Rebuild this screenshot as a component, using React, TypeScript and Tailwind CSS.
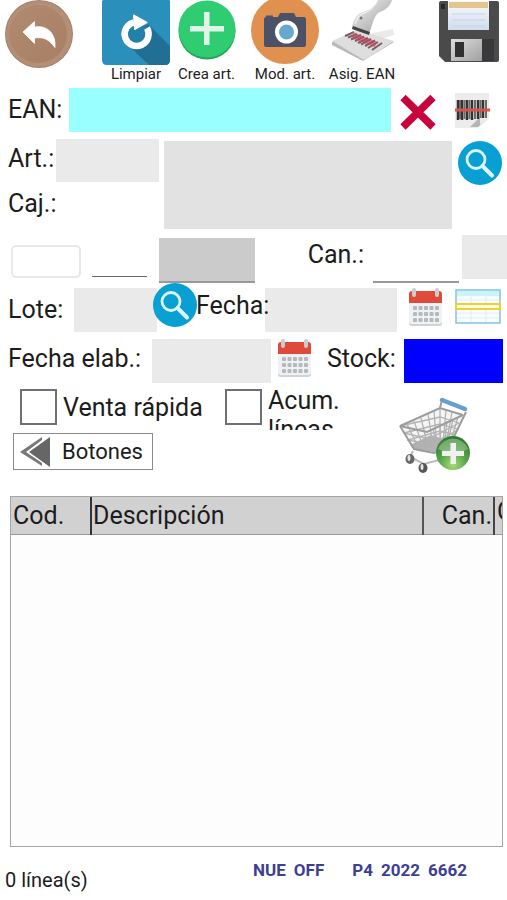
import React from "react";

const label = "text-[25px] whitespace-nowrap";
const field = "min-w-0 outline-none px-2 text-[22px]";

function BackIcon() {
  return (
    <svg viewBox="0 0 68 68" className="block h-[68px] w-[68px]">
      <defs>
        <linearGradient id="brown" x1="0" y1="0" x2="1" y2="1">
          <stop offset="0" stopColor="#b18a70" />
          <stop offset="1" stopColor="#a87f65" />
        </linearGradient>
      </defs>
      <circle cx="34" cy="34" r="34" fill="#a3806a" />
      <circle cx="34" cy="34" r="33" fill="#b48f77" />
      <circle cx="33" cy="34" r="29" fill="url(#brown)" />
      <path d="M18 32 L29.500 21.500 V27 C42 25 51 33 50 47.500 C44 39.500 39 36.500 29.500 38 V43.500 Z" fill="#fff" stroke="#fff" strokeWidth="0.800" strokeLinejoin="round" />
    </svg>
  );
}

function ResetIcon() {
  return (
    <svg viewBox="0 0 68 65" className="block h-[65px] w-[68px]">
      <path d="M1 0 H67 Q68 0 68 1 V60 Q68 65 63 65 H5 Q0 65 0 60 V1 Z" fill="#2a8fba" />
      <path d="M24 43 L46 24 L68 46 V60 Q68 65 63 65 H47 Z" fill="#216f94" />
      <circle cx="34.500" cy="34" r="12" fill="#2380a8" />
      <path d="M45 28 A12 12 0 1 1 32 22.300" fill="none" stroke="#fff" strokeWidth="6.500" />
      <path d="M32 15.500 L44.500 22.500 L33 29 Z" fill="#fff" stroke="#fff" strokeWidth="2" strokeLinejoin="round" />
    </svg>
  );
}

function AddIcon() {
  return (
    <svg viewBox="0 0 58 65" className="block h-[65px] w-[58px]">
      <circle cx="29" cy="31" r="28.500" fill="#23a558" />
      <circle cx="29" cy="29" r="28.500" fill="#2fcc71" />
      <path d="M26 12 H31.500 V26 H46 V31.500 H31.500 V45 H26 V31.500 H12 V26 H26 Z" fill="#dff5e8" />
    </svg>
  );
}

function CameraIcon() {
  return (
    <svg viewBox="0 0 68 65" className="block h-[65px] w-[68px]">
      <circle cx="34" cy="30" r="34" fill="#e0914f" />
      <path d="M15 17 V15.500 H22 V17 H27 L29 13 H43 L45 17 H53 Q55 17 55 19 V45 Q55 47 53 47 H15 Q13 47 13 45 V19 Q13 17 15 17 Z" fill="#4b5267" />
      <circle cx="35.500" cy="32" r="11.500" fill="#fff" />
      <circle cx="35.500" cy="32" r="7.500" fill="#68a8ce" />
    </svg>
  );
}

function ScannerIcon() {
  return (
    <svg viewBox="0 0 70 65" className="block h-[65px] w-[70px]">
      <defs>
        <linearGradient id="gun" x1="0" y1="0" x2="1" y2="1">
          <stop offset="0.200" stopColor="#e2e2e2" />
          <stop offset="1" stopColor="#989898" />
        </linearGradient>
      </defs>
      <path d="M42 34 L66 29 L67 35 L50 40 Z" fill="#eaeaea" />
      <path d="M5 42 L33 31 L67 42 L39 59 Q37 62 34 60 L5 45 Z" fill="#b9b9b9" />
      <path d="M5 41 L30 30 L67 41 L37 60 Z" fill="#dedede" />
      <g strokeWidth="2" stroke="#7d5f66">
        <path d="M27 32 L18 36" /><path d="M30 34 L21 37.500" /><path d="M34 35 L24 39.500" />
        <path d="M37 36.500 L28 41" /><path d="M41 38 L31 43" /><path d="M44 39 L34 44.500" />
        <path d="M48 40.500 L38 46" /><path d="M51 42 L41 48" /><path d="M55 43 L45 50" />
      </g>
      <path d="M26 35.500 L49 44.500" stroke="#c9405c" strokeWidth="6" opacity="0.550" />
      <path d="M51 0 H65 C63 7 58 10 51 13 C46 18 45 27 42 34 L25 29 C25 23 28 17 33 13 C41 11 47 7 51 0 Z" fill="url(#gun)" />
      <path d="M50 1 C48 7 42 11 35 14 Q30 17 28 24" fill="none" stroke="#fff" strokeWidth="1.500" opacity="0.600" />
      <circle cx="34" cy="18" r="1.500" fill="#777" />
      <path d="M26 26 L43 32 L42 35 L25 29 Z" fill="#454545" />
    </svg>
  );
}

function DiskIcon() {
  return (
    <svg viewBox="0 0 62 64" className="block h-[64px] w-[62px]">
      <defs>
        <linearGradient id="paper" x1="0" y1="0" x2="0" y2="1">
          <stop offset="0" stopColor="#f9fafc" />
          <stop offset="1" stopColor="#cfdcee" />
        </linearGradient>
        <linearGradient id="metal" x1="0" y1="0" x2="1" y2="1">
          <stop offset="0" stopColor="#dedede" />
          <stop offset="1" stopColor="#9f9f9f" />
        </linearGradient>
      </defs>
      <path d="M3 1 H59 Q61 1 61 3 V60 Q61 62 59 62 H7 L1 56 V3 Q1 1 3 1 Z" fill="#4b4a4b" />
      <rect x="3" y="4" width="4" height="5" fill="#292929" />
      <rect x="10" y="1" width="41" height="29" fill="url(#paper)" />
      <rect x="11" y="2" width="39" height="6" fill="#e6c58c" />
      <path d="M14 14 H47 M14 20 H47 M14 26 H47" stroke="#c9d3e2" strokeWidth="1" />
      <rect x="13" y="39" width="43" height="22" fill="#39383a" />
      <rect x="13" y="39" width="31" height="22" fill="url(#metal)" />
      <rect x="17" y="42" width="9" height="15" fill="#303030" />
    </svg>
  );
}

function CrossIcon() {
  return (
    <svg viewBox="0 0 36 36" className="block h-9 w-9">
      <path d="M3 3.500 L33 33 M33 3.500 L3 33" stroke="#c8043c" strokeWidth="7.500" />
    </svg>
  );
}

function BarcodeIcon() {
  return (
    <svg viewBox="0 0 38 38" className="block h-[38px] w-[38px]">
      <path d="M2 2 H36 V27 L25 37 H2 Z" fill="#ececec" />
      <path d="M17 36 L27 26 V34 L36 27 L25 36 Z" fill="#b5b5b5" />
      <path d="M5 9 V29 M9 9 V29 M14 9 V29 M19 9 V29 M25 9 V28 M30 9 V27" stroke="#333" strokeWidth="2.500" />
      <path d="M7 9 V28 M11.500 9 V28 M16.500 9 V28 M22 9 V28 M27.500 9 V27 M33 9 V27" stroke="#6c6c6c" strokeWidth="2" />
      <path d="M2 19 H37" stroke="#d9534b" strokeWidth="3" />
    </svg>
  );
}

function SearchIcon() {
  return (
    <svg viewBox="0 0 44 44" className="block h-11 w-11">
      <circle cx="22" cy="22" r="22" fill="#08a0d2" />
      <circle cx="18" cy="18.500" r="9" fill="none" stroke="#dcf4fb" strokeWidth="2.800" />
      <path d="M24.500 25 L34 34.500" stroke="#dcf4fb" strokeWidth="4" strokeLinecap="round" />
    </svg>
  );
}

function CalendarIcon() {
  const cols = [6.5, 12, 17.5, 23, 28.5];
  const rows = [18, 24, 30];
  return (
    <svg viewBox="0 0 36 40" className="block h-10 w-9">
      <path d="M2 14 H35 V35 Q35 38 32 38 H5 Q2 38 2 35 Z" fill="#ced3d6" />
      <path d="M2 14 H35 V33 Q35 36 32 36 H5 Q2 36 2 33 Z" fill="#eff1f2" />
      <path d="M2 15 V6 Q2 3 5 3 H32 Q35 3 35 6 V15 Z" fill="#e04a3b" />
      <rect x="5" y="0" width="4" height="9" rx="2" fill="#c9cdd0" />
      <rect x="28" y="0" width="4" height="9" rx="2" fill="#c9cdd0" />
      {rows.map((y) => cols.map((x) => (
        <rect key={`${x}-${y}`} x={x - 0.5} y={y} width="4" height="4" rx="1" fill="#b4b9bd" />
      )))}
    </svg>
  );
}

function GridIcon() {
  return (
    <svg viewBox="0 0 48 36" className="block h-9 w-12">
      <rect x="2" y="2" width="44" height="33" fill="#fafdff" stroke="#82c2df" strokeWidth="1.500" />
      <rect x="3" y="3" width="42" height="5" fill="#c8f5fb" />
      <path d="M3 12 H45 M3 25 H45 M3 30 H45 M17 8 V34 M32 3 V34" stroke="#dfedf4" />
      <rect x="2" y="16" width="44" height="5" fill="#fffbe0" stroke="#f2cf30" strokeWidth="2" />
    </svg>
  );
}

function CartIcon() {
  return (
    <svg viewBox="0 0 76 80" className="block h-20 w-[76px]">
      <defs>
        <radialGradient id="green" cx="0.500" cy="0.850" r="0.800">
          <stop offset="0" stopColor="#a6dc76" />
          <stop offset="0.500" stopColor="#57a548" />
          <stop offset="1" stopColor="#2f7c30" />
        </radialGradient>
      </defs>
      <path d="M3 31 L43 13 L66 20 L54 52 L17 54 Z" fill="#f5f5f5" />
      <path d="M15 49 L34 40 L47 44 L50 52 L37 57 L17 54 Z" fill="#b0b0b0" />
      <g fill="none" stroke="#b3b3b3" strokeWidth="1.300">
        <path d="M7 38 L32 44 L62 28 M10 45 L34 49 L59 36 M14 51 L36 54 L57 43" />
        <path d="M3 31 L43 22 L62 28 M7 38 L43 29 L60 34 M11 45 L43 36 L58 40" />
        <path d="M10 29 L22 54 M17 26 L27 55 M24 23 L32 56 M31 19 L37 56 M37 16 L40 54 M43 13 L43 53" />
        <path d="M36 33 L40 55 M43 30 L44 54 M50 26 L47 53 M56 24 L50 52 M61 22 L52 52 M49 15 L46 48 M55 17 L49 50" />
      </g>
      <g fill="none" stroke="#9d9d9d" strokeWidth="2">
        <path d="M3 31 L30 37 L66 20 M3 31 L43 13 L66 20" />
        <path d="M3 31 L17 54 L37 58 L52 52 L69 17 M43 13 L45 5" />
      </g>
      <path d="M16 56 L13 62 L27 69 L46 64" fill="none" stroke="#bcbcbc" strokeWidth="2" />
      <path d="M45 5 L68 14" stroke="#659fce" strokeWidth="4.500" strokeLinecap="round" />
      <ellipse cx="13" cy="64" rx="4.500" ry="5" fill="#666" />
      <ellipse cx="12" cy="63" rx="1.500" ry="3" fill="#e5e5e5" />
      <ellipse cx="26" cy="73" rx="4.500" ry="5" fill="#555" />
      <ellipse cx="25" cy="72" rx="1.500" ry="3" fill="#e5e5e5" />
      <circle cx="56" cy="58" r="17" fill="url(#green)" />
      <path d="M41 54 A16 16 0 0 1 71 54 Q56 62 41 54" fill="#cde4c5" opacity="0.400" />
      <path d="M53.500 48 H59 V56 H67 V61 H59 V69 H53.500 V61 H45 V56 H53.500 Z" fill="#f0f0f0" />
    </svg>
  );
}

function RewindIcon() {
  return (
    <svg viewBox="0 0 32 30" className="block h-[30px] w-8">
      <path d="M30 0 V30 L9 15 Z" fill="#666" />
      <path d="M22 0 L0 15 L22 29 V26 L6 15 L22 3 Z" fill="#777" />
    </svg>
  );
}

function Tool({ text, className, children }: { text: string; className: string; children: React.ReactNode }) {
  return (
    <button type="button" className={`flex shrink-0 flex-col items-center ${className}`}>
      {children}
      <span className="text-[15px] leading-[18px] whitespace-nowrap">{text}</span>
    </button>
  );
}

const tick = "mt-[3px] h-9 w-[37px] shrink-0 appearance-none border-2 border-[#707070] bg-white checked:bg-[#707070]";

export default function App() {
  return (
    <main className="flex min-h-screen flex-col overflow-x-hidden bg-white font-[Roboto,'Liberation_Sans',sans-serif] text-[#1c1c1c]">
      <header className="flex h-[88px] items-start pr-[7px] pl-[5px]">
        <button type="button" aria-label="Volver" className="shrink-0"><BackIcon /></button>
        <Tool text="Limpiar" className="ml-[29px] w-[68px]"><ResetIcon /></Tool>
        <Tool text="Crea art." className="w-[73px]"><AddIcon /></Tool>
        <Tool text="Mod. art." className="ml-2 w-[68px]"><CameraIcon /></Tool>
        <Tool text="Asig. EAN" className="ml-2 w-[70px]"><ScannerIcon /></Tool>
        <button type="button" aria-label="Guardar" className="ml-auto shrink-0"><DiskIcon /></button>
      </header>

      <form onSubmit={(e) => e.preventDefault()}>
        <div className="flex h-11 items-center pr-4 pl-2">
          <label htmlFor="ean" className={`w-[61px] shrink-0 ${label}`}>EAN:</label>
          <input id="ean" className={`h-11 flex-1 bg-[#99ffff] ${field}`} />
          <button type="button" aria-label="Borrar EAN" className="ml-[9px] pt-1"><CrossIcon /></button>
          <button type="button" aria-label="Leer código" className="ml-[17px]"><BarcodeIcon /></button>
        </div>

        <div className="mt-[7px] flex items-start pr-[5px] pl-2">
          <div className="w-[151px] shrink-0">
            <div className="flex h-[43px]">
              <label htmlFor="art" className={`w-12 shrink-0 leading-10 ${label}`}>Art.:</label>
              <input id="art" readOnly className={`flex-1 bg-[#eaeaea] ${field}`} />
            </div>
            <p className={`leading-[43px] ${label}`}>Caj.:</p>
          </div>
          <textarea aria-label="Descripción del artículo" readOnly className={`mt-0.5 ml-[5px] block h-[88px] flex-1 resize-none bg-[#e2e2e2] ${field}`} />
          <button type="button" aria-label="Buscar artículo" className="mt-0.5 ml-[6px]"><SearchIcon /></button>
        </div>

        <div className="mt-[6px] flex h-12 items-end pl-[11px]">
          <input aria-label="Unidad" className={`mb-[5px] h-[33px] w-[70px] rounded-[5px] border-2 border-[#e8e8e8] ${field}`} />
          <input aria-label="Cajas" className={`mb-[6px] ml-[11px] h-9 w-[55px] border-b border-[#666] ${field}`} />
          <input aria-label="Total" readOnly className={`ml-3 h-[45px] w-24 border-b-2 border-[#999] bg-[#cbcbcb] ${field}`} />
          <label htmlFor="can" className={`flex-1 self-start pr-[9px] text-right leading-10 ${label}`}>Can.:</label>
          <input id="can" className={`h-10 w-[86px] border-b-2 border-[#999] ${field}`} />
          <input aria-label="Unidad de cantidad" readOnly className={`mb-1 ml-[3px] h-11 w-[45px] bg-[#eaeaea] ${field}`} />
        </div>

        <div className="mt-[5px] flex h-11 items-center pr-[5px] pl-2">
          <label htmlFor="lote" className={`w-[66px] shrink-0 ${label}`}>Lote:</label>
          <input id="lote" className={`h-11 w-[83px] bg-[#eaeaea] ${field}`} />
          <button type="button" aria-label="Buscar lote" className="z-10 -mt-[10px] -ml-1 shrink-0"><SearchIcon /></button>
          <label htmlFor="fecha" className={`z-10 -ml-px w-[69px] shrink-0 self-start leading-9 ${label}`}>Fecha:</label>
          <input id="fecha" className={`h-11 flex-1 bg-[#eaeaea] ${field}`} />
          <button type="button" aria-label="Elegir fecha" className="ml-[10px] shrink-0 self-start"><CalendarIcon /></button>
          <button type="button" aria-label="Ver lotes" className="ml-[11px] shrink-0 self-start"><GridIcon /></button>
        </div>

        <div className="mt-[7px] flex h-11 items-start pr-1 pl-2">
          <label htmlFor="elab" className={`w-36 shrink-0 leading-10 ${label}`}>Fecha elab.:</label>
          <input id="elab" className={`h-11 flex-1 bg-[#eaeaea] ${field}`} />
          <button type="button" aria-label="Elegir fecha de elaboración" className="ml-[5px] shrink-0"><CalendarIcon /></button>
          <label htmlFor="stock" className={`ml-[15px] w-[77px] shrink-0 leading-10 ${label}`}>Stock:</label>
          <input id="stock" readOnly className={`h-11 w-[99px] bg-[#0000fe] text-white ${field}`} />
        </div>

        <div className="mt-[3px] flex items-start pr-[34px]">
          <div className="flex-1">
            <div className="flex h-11 items-start pl-5">
              <input id="rapida" type="checkbox" className={tick} />
              <label htmlFor="rapida" className={`ml-[6px] w-[162px] leading-[44px] ${label}`}>Venta rápida</label>
              <input id="acum" type="checkbox" className={tick} />
              <label htmlFor="acum" className="ml-[6px] h-11 w-[90px] overflow-hidden text-[25px] leading-[29px]">Acum. líneas</label>
            </div>
            <button type="button" className="mt-[3px] ml-[13px] flex h-[37px] w-[140px] items-center border border-[#8a8a8a] bg-white pl-[6px] text-[22px]">
              <RewindIcon />
              <span className="ml-[10px]">Botones</span>
            </button>
          </div>
          <button type="button" aria-label="Añadir al carrito" className="mt-[9px] shrink-0"><CartIcon /></button>
        </div>
      </form>

      <section className="mt-[21px] mr-1 ml-[10px] flex-1 overflow-hidden border border-[#a5a5a5] bg-[#fdfdfd]">
        <table className="w-[calc(100%+30px)] table-fixed border-collapse">
          <colgroup>
            <col className="w-20" />
            <col />
            <col className="w-[71px]" />
            <col className="w-[38px]" />
          </colgroup>
          <thead>
            <tr className="h-[37px] border-b border-[#999] bg-[#d1d1d1] text-[25px] leading-[29px]">
              <th className="border-r-2 border-[#333] pl-[2px] text-left font-normal">Cod.</th>
              <th className="border-r-2 border-[#555] pl-px text-left font-normal">Descripción</th>
              <th className="border-r-2 border-[#444] pr-px text-right font-normal">Can.</th>
              <th className="pl-[2px] text-left align-top font-normal">C</th>
            </tr>
          </thead>
          <tbody />
        </table>
      </section>

      <footer className="flex h-[53px] items-start justify-between pr-10 pl-[5px]">
        <p className="pt-[21px] text-[20px] leading-6">0 línea(s)</p>
        <p className="flex gap-2 pt-[13px] text-[17px] leading-5 font-bold text-[#3c3f94]">
          <span>NUE</span>
          <span>OFF</span>
          <span className="ml-5">P4</span>
          <span>2022</span>
          <span>6662</span>
        </p>
      </footer>
    </main>
  );
}
